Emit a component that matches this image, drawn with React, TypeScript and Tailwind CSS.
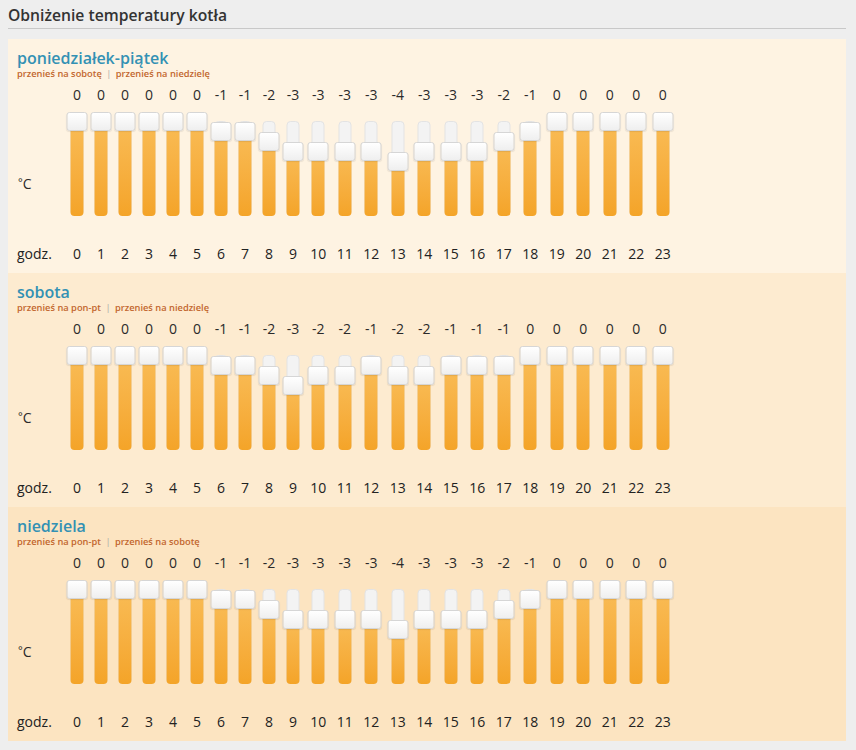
import React from "react";

type Section = {
  title: string;
  links: [string, string];
  bg: string;
  values: number[];
};

const sections: Section[] = [
  {
    title: "poniedziałek-piątek",
    links: ["przenieś na sobotę", "przenieś na niedzielę"],
    bg: "bg-[#fef3e2]",
    values: [0, 0, 0, 0, 0, 0, -1, -1, -2, -3, -3, -3, -3, -4, -3, -3, -3, -2, -1, 0, 0, 0, 0, 0],
  },
  {
    title: "sobota",
    links: ["przenieś na pon-pt", "przenieś na niedzielę"],
    bg: "bg-[#fdebd0]",
    values: [0, 0, 0, 0, 0, 0, -1, -1, -2, -3, -2, -2, -1, -2, -2, -1, -1, -1, 0, 0, 0, 0, 0, 0],
  },
  {
    title: "niedziela",
    links: ["przenieś na pon-pt", "przenieś na sobotę"],
    bg: "bg-[#fce4c1]",
    values: [0, 0, 0, 0, 0, 0, -1, -1, -2, -3, -3, -3, -3, -4, -3, -3, -3, -2, -1, 0, 0, 0, 0, 0],
  },
];

const hours = Array.from({ length: 24 }, (_, i) => i);

function Col({ i, children, className = "" }: { i: number; children?: React.ReactNode; className?: string }) {
  return (
    <div className={(i < 10 ? "w-[24px] " : "w-[26.5px] ") + "shrink-0 flex justify-center " + className}>
      {children}
    </div>
  );
}

function Slider({ v }: { v: number }) {
  const top = -v * 10;
  return (
    <div className="relative w-full h-[104px]">
      <div className="absolute left-1/2 -translate-x-1/2 top-[9px] bottom-0 w-[13px] rounded-[4px] bg-[#f3f3f3] border border-[#e3e3e3]" />
      <div
        className="absolute left-1/2 -translate-x-1/2 bottom-0 w-[13px] rounded-b-[4px] bg-linear-to-b from-[#f9bc55] to-[#f4a428]"
        style={{ top: top + 9 }}
      />
      <div
        className="absolute left-1/2 -translate-x-1/2 w-[21px] h-[19px] rounded-[3px] border border-[#d6d6d6] bg-linear-to-b from-[#ffffff] to-[#efefef] shadow-[0_1px_1px_rgba(0,0,0,0.08)]"
        style={{ top }}
      />
    </div>
  );
}

function DaySection({ s }: { s: Section }) {
  return (
    <div className={"h-[234px] px-[9px] pt-[10px] pb-[10px] " + s.bg}>
      <div className="text-[16px] leading-[18px] font-semibold text-[#3391b4]">{s.title}</div>
      <div className="mt-[1px] text-[9.3px] leading-[11px] font-semibold text-[#c2662d]">
        {s.links[0]} <span className="text-[#a8a8a8] font-normal px-[2px]">|</span> {s.links[1]}
      </div>
      <div className="flex mt-[7px] h-[18px] text-[14px] leading-[18px] text-[#2a2a2a]">
        <div className="w-[48px] shrink-0" />
        {s.values.map((v, i) => (
          <Col key={i} i={i}>
            {v === 0 ? "0" : "-" + Math.abs(v)}
          </Col>
        ))}
      </div>
      <div className="flex mt-[8px]">
        <div className="w-[48px] shrink-0 pt-[61px] pl-[1px] text-[14px] leading-[18px] text-[#2a2a2a]">
          <span className="text-[11px] align-[3px]">°</span>C
        </div>
        {s.values.map((v, i) => (
          <Col key={i} i={i}>
            <Slider v={v} />
          </Col>
        ))}
      </div>
      <div className="flex mt-[29px] h-[18px] text-[14px] leading-[18px] text-[#222]">
        <div className="w-[48px] shrink-0">godz.</div>
        {hours.map((h) => (
          <Col key={h} i={h}>
            {h}
          </Col>
        ))}
      </div>
    </div>
  );
}

export default function App() {
  return (
    <div className="min-h-screen bg-[#eeeeee] font-['Open_Sans',sans-serif]">
      <div className="ml-[8px] w-[838px]">
        <div className="pt-[4px] pb-[2px] border-b border-[#c8c8c8] text-[15.7px] leading-[22px] font-semibold text-[#333]">
          Obniżenie temperatury kotła
        </div>
        <div className="mt-[10px]">
          {sections.map((s, i) => (
            <DaySection key={i} s={s} />
          ))}
        </div>
      </div>
    </div>
  );
}
